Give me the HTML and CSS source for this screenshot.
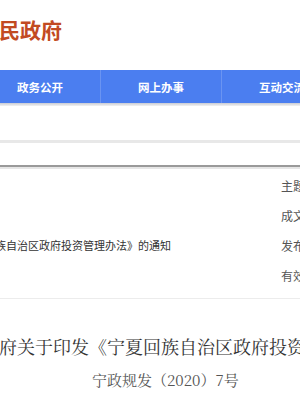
FILE: index.html
```html
<!DOCTYPE html>
<html lang="zh-CN">
<head>
    <meta charset="UTF-8">
    <meta name="viewport" content="width=device-width, initial-scale=1.0">
    <title>宁夏回族自治区人民政府</title>
    <link rel="stylesheet" href="styles.css">
</head>
<body>
    <!-- Site header -->
    <div class="header">
        <div class="site-title">宁夏回族自治区人民政府</div>
    </div>

    <!-- Main navigation -->
    <nav class="nav">
        <a class="nav-item">政务公开</a>
        <a class="nav-item">网上办事</a>
        <a class="nav-item">互动交流</a>
    </nav>
    <div class="nav-shadow"></div>

    <div class="crumb"></div>
    <div class="band"></div>
    <div class="spacer"></div>
    <div class="rule"></div>

    <!-- Document meta table -->
    <div class="meta">
        <div class="meta-row"><span class="meta-left"></span><span class="meta-label">主题分类</span></div>
        <div class="meta-row"><span class="meta-left"></span><span class="meta-label">成文日期</span></div>
        <div class="meta-row"><span class="meta-left doc-name">宁夏回族自治区人民政府关于印发《宁夏回族自治区政府投资管理办法》的通知</span><span class="meta-label">发布日期</span></div>
        <div class="meta-row"><span class="meta-left"></span><span class="meta-label">有效性</span></div>
    </div>

    <!-- Article heading -->
    <div class="article">
        <h1 class="article-title">宁夏回族自治区人民政府关于印发《宁夏回族自治区政府投资管理办法》的通知</h1>
        <p class="doc-number">宁政规发（2020）7号</p>
    </div>
</body>
</html>
```

FILE: styles.css
```css
body { margin: 0; padding: 0; background: #fff; font-family: "Noto Sans CJK SC", "Noto Sans", sans-serif; overflow: hidden; width: 300px; }
.header { height: 70px; overflow: hidden; }
.site-title { white-space: nowrap; font-size: 21px; font-weight: bold; color: #c24a22; line-height: 26px; padding-top: 16px; margin-left: -169px; letter-spacing: 0; }
.nav { height: 33px; background: #4b7ef0; display: flex; margin-left: -20px; overflow: hidden; width: 360px; }
.nav-item { width: 120px; flex: none; display: flex; align-items: center; justify-content: center; color: #fff; font-size: 11.5px; font-weight: bold; position: relative; }
.nav-item + .nav-item { border-left: 1px solid #6a94f2; background-clip: padding-box; }
.nav-shadow { height: 3px; background: linear-gradient(#c9cbd3, #f2f2f2); }
.crumb { height: 34px; }
.band { height: 3px; background: #e8e8e8; }
.spacer { height: 22px; }
.rule { height: 2px; background: #9a9a9a; border-bottom: 2px solid #e6e6e6; }
.meta { padding-top: 1px; border-bottom: 1px solid #ececec; padding-bottom: 8px; }
.meta-row { height: 30px; display: flex; align-items: center; overflow: hidden; }
.meta-left { flex: 1; white-space: nowrap; overflow: hidden; font-size: 11px; color: #333; }
.doc-name { text-indent: -214px; }
.meta-label { width: 19px; flex: none; white-space: nowrap; font-size: 12px; color: #555; overflow: hidden; }
.article { padding-top: 34px; }
.article-title { margin: 0; white-space: nowrap; font-family: "Noto Serif CJK SC", "Liberation Serif", serif; font-weight: normal; font-size: 18px; color: #333; line-height: 26px; margin-left: -181px; }
.doc-number { margin: 11px 0 0 92px; font-family: "Noto Serif CJK SC", "Liberation Serif", serif; font-size: 15px; color: #555; line-height: 20px; white-space: nowrap; }
```
